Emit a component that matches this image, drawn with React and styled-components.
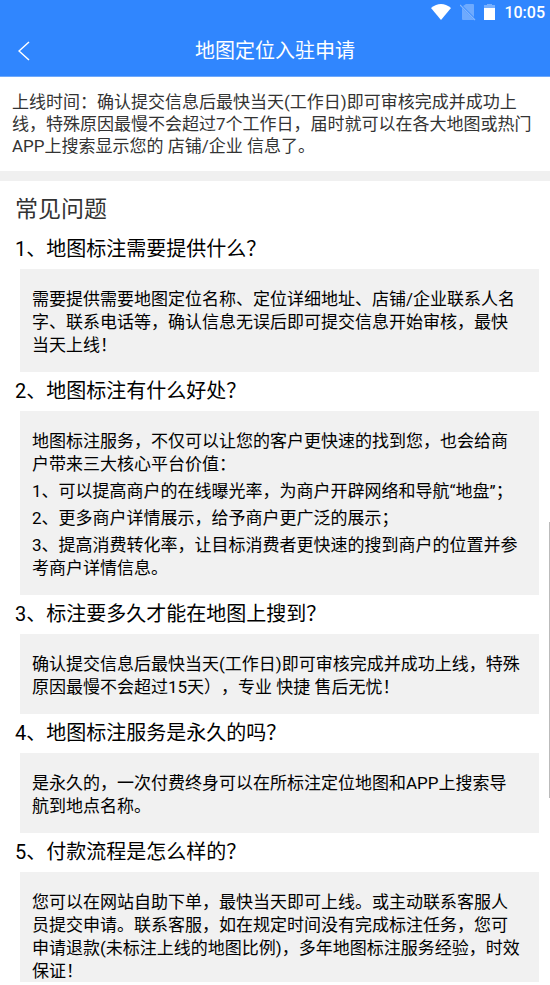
import React from 'react'
import styled, { createGlobalStyle } from 'styled-components'

const GlobalStyle = createGlobalStyle`
  * {
    box-sizing: border-box;
  }
  body {
    margin: 0;
    background: #fff;
    font-family: Roboto, "Noto Sans CJK SC", sans-serif;
    text-spacing-trim: space-all;
  }
  h1, h2, h3, p {
    margin: 0;
    font-weight: 400;
  }
`

const questions = [
  {
    title: '1、地图标注需要提供什么？',
    answer: [
      '需要提供需要地图定位名称、定位详细地址、店铺/企业联系人名\n字、联系电话等，确认信息无误后即可提交信息开始审核，最快\n当天上线！',
    ],
  },
  {
    title: '2、地图标注有什么好处？',
    answer: [
      '地图标注服务，不仅可以让您的客户更快速的找到您，也会给商\n户带来三大核心平台价值：',
      '1、可以提高商户的在线曝光率，为商户开辟网络和导航“地盘”；',
      '2、更多商户详情展示，给予商户更广泛的展示；',
      '3、提高消费转化率，让目标消费者更快速的搜到商户的位置并参\n考商户详情信息。',
    ],
  },
  {
    title: '3、标注要多久才能在地图上搜到？',
    answer: [
      '确认提交信息后最快当天(工作日)即可审核完成并成功上线，特殊\n原因最慢不会超过15天），专业 快捷 售后无忧！',
    ],
  },
  {
    title: '4、地图标注服务是永久的吗？',
    answer: [
      '是永久的，一次付费终身可以在所标注定位地图和APP上搜索导\n航到地点名称。',
    ],
  },
  {
    title: '5、付款流程是怎么样的？',
    answer: [
      '您可以在网站自助下单，最快当天即可上线。或主动联系客服人\n员提交申请。联系客服，如在规定时间没有完成标注任务，您可\n申请退款(未标注上线的地图比例)，多年地图标注服务经验，时效\n保证！',
    ],
  },
]

function StatusIcons() {
  return (
    <>
      <svg width="22" height="18" viewBox="0 0 22 18" aria-hidden="true">
        <path d="M1 5Q11-3 21 5L11 17Z" fill="#fff" />
      </svg>
      <svg width="16" height="18" viewBox="0 0 16 18" aria-hidden="true">
        <path d="M6 1h7q1 0 1 1v12L3 3ZM2 5l12 12H3q-1 0-1-1Z" fill="#fff" opacity=".3" />
        <path d="M0 2l15 15" stroke="#fff" strokeWidth="1.2" opacity=".4" />
      </svg>
      <svg width="12" height="18" viewBox="0 0 12 18" aria-hidden="true">
        <path d="M3 1h5v1h3v3H0V2h3Z" fill="#fff" opacity=".35" />
        <path d="M0 5h11v12H0Z" fill="#fff" />
      </svg>
    </>
  )
}

export default function App() {
  return (
    <Page>
      <GlobalStyle />
      <Header>
        <StatusBar>
          <StatusIcons />
          <time>10:05</time>
        </StatusBar>
        <NavBar>
          <BackButton type="button" aria-label="返回">
            <svg width="12" height="20" viewBox="0 0 12 20" fill="none" aria-hidden="true">
              <path d="M11 1L1 10l10 9" stroke="#fff" strokeWidth="1.5" />
            </svg>
          </BackButton>
          <NavTitle>地图定位入驻申请</NavTitle>
        </NavBar>
      </Header>

      <Content>
        <Notice>
          {'上线时间：确认提交信息后最快当天(工作日)即可审核完成并成功上\n线，特殊原因最慢不会超过7个工作日，届时就可以在各大地图或热门\nAPP上搜索显示您的 店铺/企业 信息了。'}
        </Notice>
        <Faq>
          <FaqTitle>常见问题</FaqTitle>
          {questions.map(item => (
            <section key={item.title}>
              <Question>{item.title}</Question>
              <Answer>
                {item.answer.map(text => (
                  <p key={text}>{text}</p>
                ))}
              </Answer>
            </section>
          ))}
        </Faq>
      </Content>
      <ScrollThumb />
    </Page>
  )
}

const Page = styled.div`
  position: relative;
  display: flex;
  flex-direction: column;
  height: 100vh;
  padding-bottom: 3px;
`

const Header = styled.header`
  flex: none;
  color: #fff;
  background: #3086fe;
  border-bottom: 1px solid #6ea9fb;
`

const StatusBar = styled.div`
  display: flex;
  align-items: center;
  justify-content: flex-end;
  gap: 8px;
  height: 24px;
  padding-right: 5px;
  font-size: 16px;
  font-weight: 500;
`

const NavBar = styled.div`
  display: grid;
  grid-template-columns: 48px 1fr 48px;
  align-items: center;
  height: 52px;
  padding-top: 2px;
`

const BackButton = styled.button`
  display: flex;
  align-items: center;
  height: 48px;
  padding: 0 0 0 18px;
  border: 0;
  background: none;
  cursor: pointer;
`

const NavTitle = styled.h1`
  font-size: 20px;
  line-height: 28px;
  text-align: center;
`

const Content = styled.main`
  flex: 1;
  min-height: 0;
  overflow-y: auto;
  scrollbar-width: none;
`

const Notice = styled.p`
  padding: 14px 8px 14px 12px;
  border-bottom: 10px solid #f0f0f0;
  color: #333;
  font-size: 17px;
  line-height: 22px;
  white-space: pre-line;
`

const Faq = styled.section`
  padding: 11px 11px 15px 15px;
`

const FaqTitle = styled.h2`
  padding-bottom: 2px;
  color: #333;
  font-size: 23px;
  line-height: 36px;
`

const Question = styled.h3`
  color: #000;
  font-size: 20px;
  line-height: 39px;
`

const Answer = styled.div`
  display: flex;
  flex-direction: column;
  gap: 4px;
  margin-left: 5px;
  padding: 19px 8px 15px 12px;
  background: #f1f1f1;
  color: #000;
  font-size: 17px;
  line-height: 23px;
  white-space: pre-line;
`

/* thin overlay thumb on the right edge */
const ScrollThumb = styled.div`
  position: absolute;
  top: 53%;
  right: 0;
  width: 1px;
  height: 28%;
  background: #bbb;
`
